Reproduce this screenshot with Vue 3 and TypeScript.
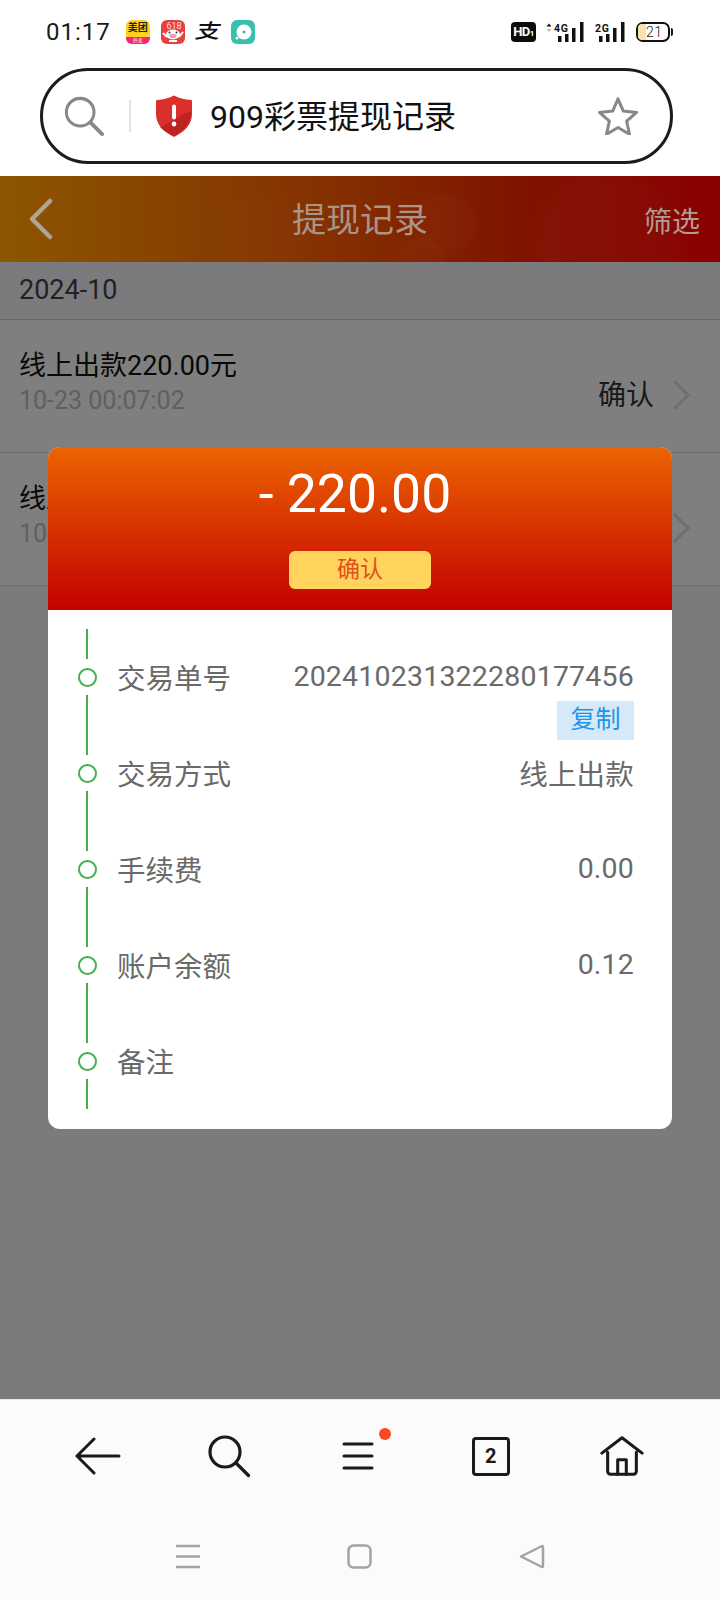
<script setup lang="ts">
interface Record {
  id: number
  title: string
  time: string
}

interface Detail {
  label: string
  value: string
  copy?: boolean
}

const records: Record[] = [
  { id: 1, title: '线上出款220.00元', time: '10-23 00:07:02' },
  { id: 2, title: '线上出款220.00元', time: '10-23 00:07:02' },
]

const details: Detail[] = [
  { label: '交易单号', value: '202410231322280177456', copy: true },
  { label: '交易方式', value: '线上出款' },
  { label: '手续费', value: '0.00' },
  { label: '账户余额', value: '0.12' },
  { label: '备注', value: '' },
]

const signals = [
  { id: 'a', net: '4G', arrows: true },
  { id: 'b', net: '2G', arrows: false },
]
</script>

<template>
  <div class="phone">
    <div class="status">
      <span class="clock">01:17</span>
      <div class="apps">
        <span class="app meituan"><b>美团</b><i>外卖</i></span>
        <span class="app pig">
          <svg width="24" height="24" viewBox="0 0 24 24">
            <text x="13" y="9" text-anchor="middle" font-size="9" fill="#ffd9e4" font-family="Roboto">618</text>
            <ellipse cx="12" cy="14.500" rx="7" ry="5" fill="#fff" />
            <ellipse cx="12" cy="16" rx="3.500" ry="2.200" fill="#f59ab0" />
            <circle cx="8.500" cy="12.500" r="1" fill="#333" />
            <circle cx="15.500" cy="12.500" r="1" fill="#333" />
            <path d="M2 13l4 4M22 12l-4 5M8 21h8" stroke="#fff" stroke-width="2" fill="none" />
          </svg>
        </span>
        <span class="app alipay">支</span>
        <span class="app teal">
          <svg width="24" height="24" viewBox="0 0 24 24">
            <circle cx="13" cy="12" r="7.500" fill="#fff" />
            <circle cx="13" cy="12" r="1.500" fill="#38c0ac" />
            <circle cx="6" cy="18" r="1.500" fill="#fff" />
          </svg>
        </span>
      </div>
      <div class="indicators">
        <span class="hd">HD<small>1</small></span>
        <svg v-for="s in signals" :key="s.id" class="signal" width="38" height="21" viewBox="0 0 38 21">
          <template v-if="s.arrows">
            <path d="M3 1.500l2.500 3h-5z" fill="#111" />
            <path d="M3 10l2.500-3h-5z" fill="#bbb" />
          </template>
          <text x="8" y="10" font-size="10.500" font-weight="700" fill="#111" font-family="Roboto" textLength="14">{{ s.net }}</text>
          <rect x="12" y="14" width="3.500" height="6" fill="#111" />
          <rect x="19" y="12" width="3.500" height="8" fill="#111" />
          <rect x="26" y="6" width="3.500" height="14" fill="#111" />
          <rect x="34" y="0" width="3.500" height="20" fill="#111" />
        </svg>
        <span class="battery"><span class="battery-fill"></span><span class="battery-num">21</span></span>
      </div>
    </div>

    <div class="search-wrap">
      <div class="pill">
        <svg class="pill-search" width="40" height="40" viewBox="0 0 42 42" fill="none" stroke="#888" stroke-width="3.200" stroke-linecap="round">
          <circle cx="17" cy="17" r="14.500" />
          <path d="M28 28l12 12" stroke-width="4" />
        </svg>
        <span class="pill-divider"></span>
        <svg class="shield" width="36" height="42" viewBox="0 0 36 42">
          <path d="M18 0.500c5 2.500 10 4 17 4.500c1 0 1 1 1 2v12c0 11-8 18-18 23c-10-5-18-12-18-23v-12c0-1 0-2 1-2c7-.5 12-2 17-4.500z" fill="#dc2e2a" />
          <path d="M4 32c6-2 18-10 31-16c0 12-7 20-17 25c-6-3-11-6-14-9z" fill="#bd2320" />
          <rect x="16" y="9.500" width="4" height="15" rx="2" fill="#fff" />
          <circle cx="18" cy="29" r="2.400" fill="#fff" />
        </svg>
        <span class="pill-text">909彩票提现记录</span>
        <svg class="star" width="40" height="38" viewBox="0 0 42 40" fill="none" stroke="#888" stroke-width="3.200" stroke-linejoin="round">
          <path d="M21 2l5.600 12.800 14 1.400-10.500 9.300 3 13.700-12.100-7.100-12.100 7.100 3-13.700L1.400 16.200l14-1.400z" />
        </svg>
      </div>
    </div>

    <div class="page">
      <div class="page-head">
        <svg class="head-back" width="26" height="42" viewBox="0 0 26 42" fill="none" stroke="#b0a498" stroke-width="4.500" stroke-linecap="round" stroke-linejoin="round">
          <path d="M22 3L4 21l18 18" />
        </svg>
        <span class="head-title">提现记录</span>
        <span class="head-filter">筛选</span>
      </div>

      <div class="month">2024-10</div>
      <ul class="list">
        <li v-for="r in records" :key="r.id" class="row">
          <div>
            <div class="row-title">{{ r.title }}</div>
            <div class="row-time">{{ r.time }}</div>
          </div>
          <div class="row-state">
            <span>确认</span>
            <svg class="chevron" width="20" height="32" viewBox="0 0 20 32" fill="none" stroke="#ddd" stroke-width="3">
              <path d="M3 2l14 14L3 30" />
            </svg>
          </div>
        </li>
      </ul>

      <div class="overlay">
        <div class="modal">
          <div class="modal-head">
            <div class="amount">- 220.00</div>
            <div class="badge">确认</div>
          </div>
          <div class="modal-body">
            <div v-for="d in details" :key="d.label" class="detail">
              <div class="node">
                <span class="seg"></span>
                <span class="dot"></span>
                <span class="seg"></span>
              </div>
              <span class="label">{{ d.label }}</span>
              <span class="value">
                {{ d.value }}
                <span v-if="d.copy" class="copy">复制</span>
              </span>
            </div>
          </div>
        </div>
      </div>
    </div>

    <div class="bottom">
      <div class="nav">
        <svg width="46" height="38" viewBox="0 0 46 38" fill="none" stroke="#1a1a1a" stroke-width="3" stroke-linecap="round" stroke-linejoin="round">
          <path d="M2 19h42M19 2L2 19l17 17" />
        </svg>
        <svg width="44" height="44" viewBox="0 0 44 44" fill="none" stroke="#1a1a1a" stroke-width="3.200" stroke-linecap="round">
          <circle cx="18" cy="18" r="15" />
          <path d="M29 29l12.500 12.500" />
        </svg>
        <span class="menu">
          <svg width="32" height="28" viewBox="0 0 32 28" fill="none" stroke="#1a1a1a" stroke-width="3" stroke-linecap="round">
            <path d="M2 2h28M2 14h28M2 26h28" />
          </svg>
          <i class="red-dot"></i>
        </span>
        <span class="tabs">2</span>
        <svg class="home" width="44" height="42" viewBox="0 0 46 42" fill="none" stroke="#1a1a1a" stroke-width="3.200" stroke-linecap="round" stroke-linejoin="round">
          <path d="M2 18L23 2l21 16M8 17v20a3 3 0 0 0 3 3h24a3 3 0 0 0 3-3V17" />
          <path d="M18.500 40V25h9v15" />
        </svg>
      </div>
      <div class="sys">
        <svg width="26" height="25" viewBox="0 0 26 25" fill="none" stroke="#a3a3a3" stroke-width="2.500">
          <path d="M1 2h24M1 12.500h24M1 23h24" />
        </svg>
        <svg width="26" height="25" viewBox="0 0 26 25" fill="none" stroke="#a3a3a3" stroke-width="2.500">
          <rect x="1.500" y="1.500" width="22" height="22" rx="5" />
        </svg>
        <svg width="26" height="25" viewBox="0 0 26 25" fill="none" stroke="#a3a3a3" stroke-width="2.500" stroke-linejoin="round">
          <path d="M2 12.500L23 2c1 0 1 .5 1 1v19c0 .5 0 1-1 1z" />
        </svg>
      </div>
    </div>
  </div>
</template>

<style>
html,
body {
  margin: 0;
  background: #fff;
}
</style>

<style scoped>
.phone {
  width: 720px;
  height: 1600px;
  display: flex;
  flex-direction: column;
  font-family: Roboto, "Noto Sans CJK SC", sans-serif;
  overflow: hidden;
}

.status {
  height: 60px;
  padding: 0 50px 0 46px;
  display: flex;
  align-items: center;
  box-sizing: border-box;
}

.clock {
  font-size: 24px;
  letter-spacing: 1px;
  color: #1a1a1a;
  margin-top: 4px;
}

.apps {
  display: flex;
  gap: 11px;
  margin-left: 15px;
  margin-top: 4px;
}

.app {
  width: 24px;
  height: 24px;
  border-radius: 6px;
  overflow: hidden;
  display: block;
}

.meituan {
  background: #ffd21f;
  position: relative;
  text-align: center;
}

.meituan b {
  display: block;
  font-size: 10px;
  line-height: 16px;
  height: 17px;
  color: #222;
}

.meituan i {
  display: block;
  height: 7px;
  font-size: 5px;
  line-height: 7px;
  font-style: normal;
  color: #ffd;
  background: #f0287c;
}

.pig {
  background: #e8403c;
}

.alipay {
  font-size: 25px;
  line-height: 24px;
  font-weight: 500;
  text-align: center;
  color: #111;
  transform: scale(1, 0.8) skewX(-12deg);
  overflow: visible;
}

.teal {
  background: #38c0ac;
}

.indicators {
  margin-left: auto;
  display: flex;
  align-items: center;
  margin-top: 4px;
}

.hd {
  width: 25px;
  height: 20px;
  border-radius: 4px;
  background: #0c0c0c;
  color: #fff;
  font-size: 13px;
  font-weight: 700;
  line-height: 20px;
  text-align: center;
  margin-right: 10px;
  letter-spacing: -0.5px;
}

.hd small {
  font-size: 8px;
}

.signal {
  margin-right: 3px;
}

.battery {
  position: relative;
  width: 34px;
  height: 20px;
  margin-left: 8px;
  border: 2px solid #111;
  border-radius: 7px;
  box-sizing: border-box;
  display: block;
}

.battery::after {
  content: "";
  position: absolute;
  right: -5px;
  top: 4px;
  width: 2px;
  height: 8px;
  background: #111;
  border-radius: 0 2px 2px 0;
}

.battery-fill {
  position: absolute;
  left: 0;
  top: 0;
  bottom: 0;
  width: 8px;
  border-radius: 4px 0 0 4px;
  background: #fbe3ad;
}

.battery-num {
  position: absolute;
  left: 8px;
  top: 0;
  font-size: 14px;
  line-height: 16px;
  color: #222;
  letter-spacing: 0.5px;
  font-weight: 300;
}

.search-wrap {
  height: 116px;
  padding: 8px 47px 12px 40px;
  box-sizing: border-box;
}

.pill {
  height: 96px;
  box-sizing: border-box;
  border: 3px solid #1c1c1c;
  border-radius: 48px;
  padding: 0 32px 0 21px;
  display: flex;
  align-items: center;
}

.pill-divider {
  width: 2px;
  height: 32px;
  background: #e2e2e2;
  margin-left: 25px;
  margin-right: 25px;
}

.pill-text {
  font-size: 32px;
  color: #111;
  margin-left: 18px;
  margin-bottom: 4px;
  flex: 1;
}

.page {
  position: relative;
  flex: 1;
  background: #f6f6fa;
}

/* sits above the dim layer, so these are the dimmed colours */
.page-head {
  height: 86px;
  display: flex;
  align-items: center;
  justify-content: center;
  position: relative;
  z-index: 1;
  background:
    radial-gradient(circle 50px at 262px 62px, rgba(255, 255, 255, 0.008) 80%, transparent),
    radial-gradient(circle 36px at 446px 48px, rgba(255, 255, 255, 0.02) 70%, transparent),
    radial-gradient(circle 30px at 420px 88px, rgba(255, 255, 255, 0.02) 70%, transparent),
    radial-gradient(circle 82px at 608px 70px, rgba(255, 255, 255, 0.015) 80%, transparent),
    linear-gradient(90deg, #8c5600, #832c00 50%, #801300 72%, #8a0000);
}

.head-back {
  position: absolute;
  left: 28px;
  top: 22px;
}

.head-title {
  font-size: 34px;
  margin-bottom: 4px;
  color: #aa9488;
}

.head-filter {
  position: absolute;
  right: 20px;
  top: 28px;
  font-size: 28px;
  line-height: 38px;
  color: #b09c94;
}

.month {
  height: 57px;
  line-height: 56px;
  padding-left: 19px;
  font-size: 27px;
  color: #444;
  border-bottom: 1px solid #ccc;
  box-sizing: content-box;
}

.list {
  list-style: none;
  margin: 0;
  padding: 0;
  background: #fff;
}

.row {
  border-bottom: 1px solid #ddd;
  padding: 28px 30px 0 19px;
  box-sizing: border-box;
  height: 133px;
  display: flex;
  justify-content: space-between;
}

.row-title {
  font-size: 27px;
  line-height: 37px;
  color: #111;
}

.row-time {
  font-size: 25px;
  line-height: 32px;
  color: #c0c0c0;
}

.row-state {
  display: flex;
  align-items: center;
  gap: 17px;
  height: 90px;
  font-size: 28px;
  color: #333;
  margin-right: -1px;
}

.chevron {
  margin-top: 4px;
}

.overlay {
  position: absolute;
  inset: 0;
  background: rgba(0, 0, 0, 0.5);
  padding-top: 271px;
  box-sizing: border-box;
  display: flex;
  justify-content: center;
  align-items: flex-start;
}

.modal {
  width: 624px;
  border-radius: 12px;
  overflow: hidden;
  background: #fff;
}

.modal-head {
  height: 163px;
  padding-top: 9px;
  box-sizing: border-box;
  display: flex;
  flex-direction: column;
  align-items: center;
  background: linear-gradient(180deg, #ec6400, #c40000);
}

.amount {
  font-size: 53.500px;
  line-height: 76px;
  color: #fff;
  margin-right: 10px;
}

.badge {
  margin-top: 19px;
  width: 142px;
  height: 38px;
  border-radius: 6px;
  background: #ffd35c;
  color: #e0501a;
  font-size: 23px;
  line-height: 37px;
  text-align: center;
}

.modal-body {
  padding: 19px 38px 20px 29px;
}

.detail {
  height: 96px;
  display: flex;
  align-items: center;
  color: #6a6a6a;
  font-size: 28.500px;
}

.node {
  width: 20px;
  height: 96px;
  display: flex;
  flex-direction: column;
  align-items: center;
  justify-content: space-between;
}

.seg {
  width: 2px;
  height: 30px;
  background: #45b04c;
}

.dot {
  width: 19px;
  height: 19px;
  box-sizing: border-box;
  border: 2px solid #45b04c;
  border-radius: 50%;
}

.label {
  margin-left: 20px;
  flex: 1;
  margin-bottom: 2px;
}

.value {
  position: relative;
  letter-spacing: 0.2px;
  margin-bottom: 2px;
}

.copy {
  position: absolute;
  right: 0;
  top: 41px;
  width: 77px;
  height: 39px;
  line-height: 37px;
  text-align: center;
  font-size: 25px;
  letter-spacing: 0;
  color: #2196e8;
  background: #d6e9f8;
}

.bottom {
  height: 201px;
  background: #fbfbfb;
  border-top: 1px solid #e8e8e8;
  box-sizing: border-box;
}

.nav {
  height: 112px;
  padding: 0 33px;
  display: grid;
  grid-template-columns: repeat(5, 1fr);
  justify-items: center;
  align-items: center;
}

.menu {
  position: relative;
  display: block;
  height: 28px;
  margin-right: 3px;
}

.red-dot {
  position: absolute;
  right: -17px;
  top: -14px;
  width: 12px;
  height: 12px;
  border-radius: 50%;
  background: #fb4820;
}

.tabs {
  width: 38px;
  height: 39px;
  box-sizing: border-box;
  border: 3px solid #1a1a1a;
  border-radius: 4px;
  font-size: 20px;
  font-weight: 700;
  line-height: 33px;
  text-align: center;
  color: #1a1a1a;
}

.home {
  margin-left: 1px;
}

.sys {
  margin-top: 32px;
  padding: 0 102px;
  display: grid;
  grid-template-columns: repeat(3, 1fr);
  justify-items: center;
}
</style>
